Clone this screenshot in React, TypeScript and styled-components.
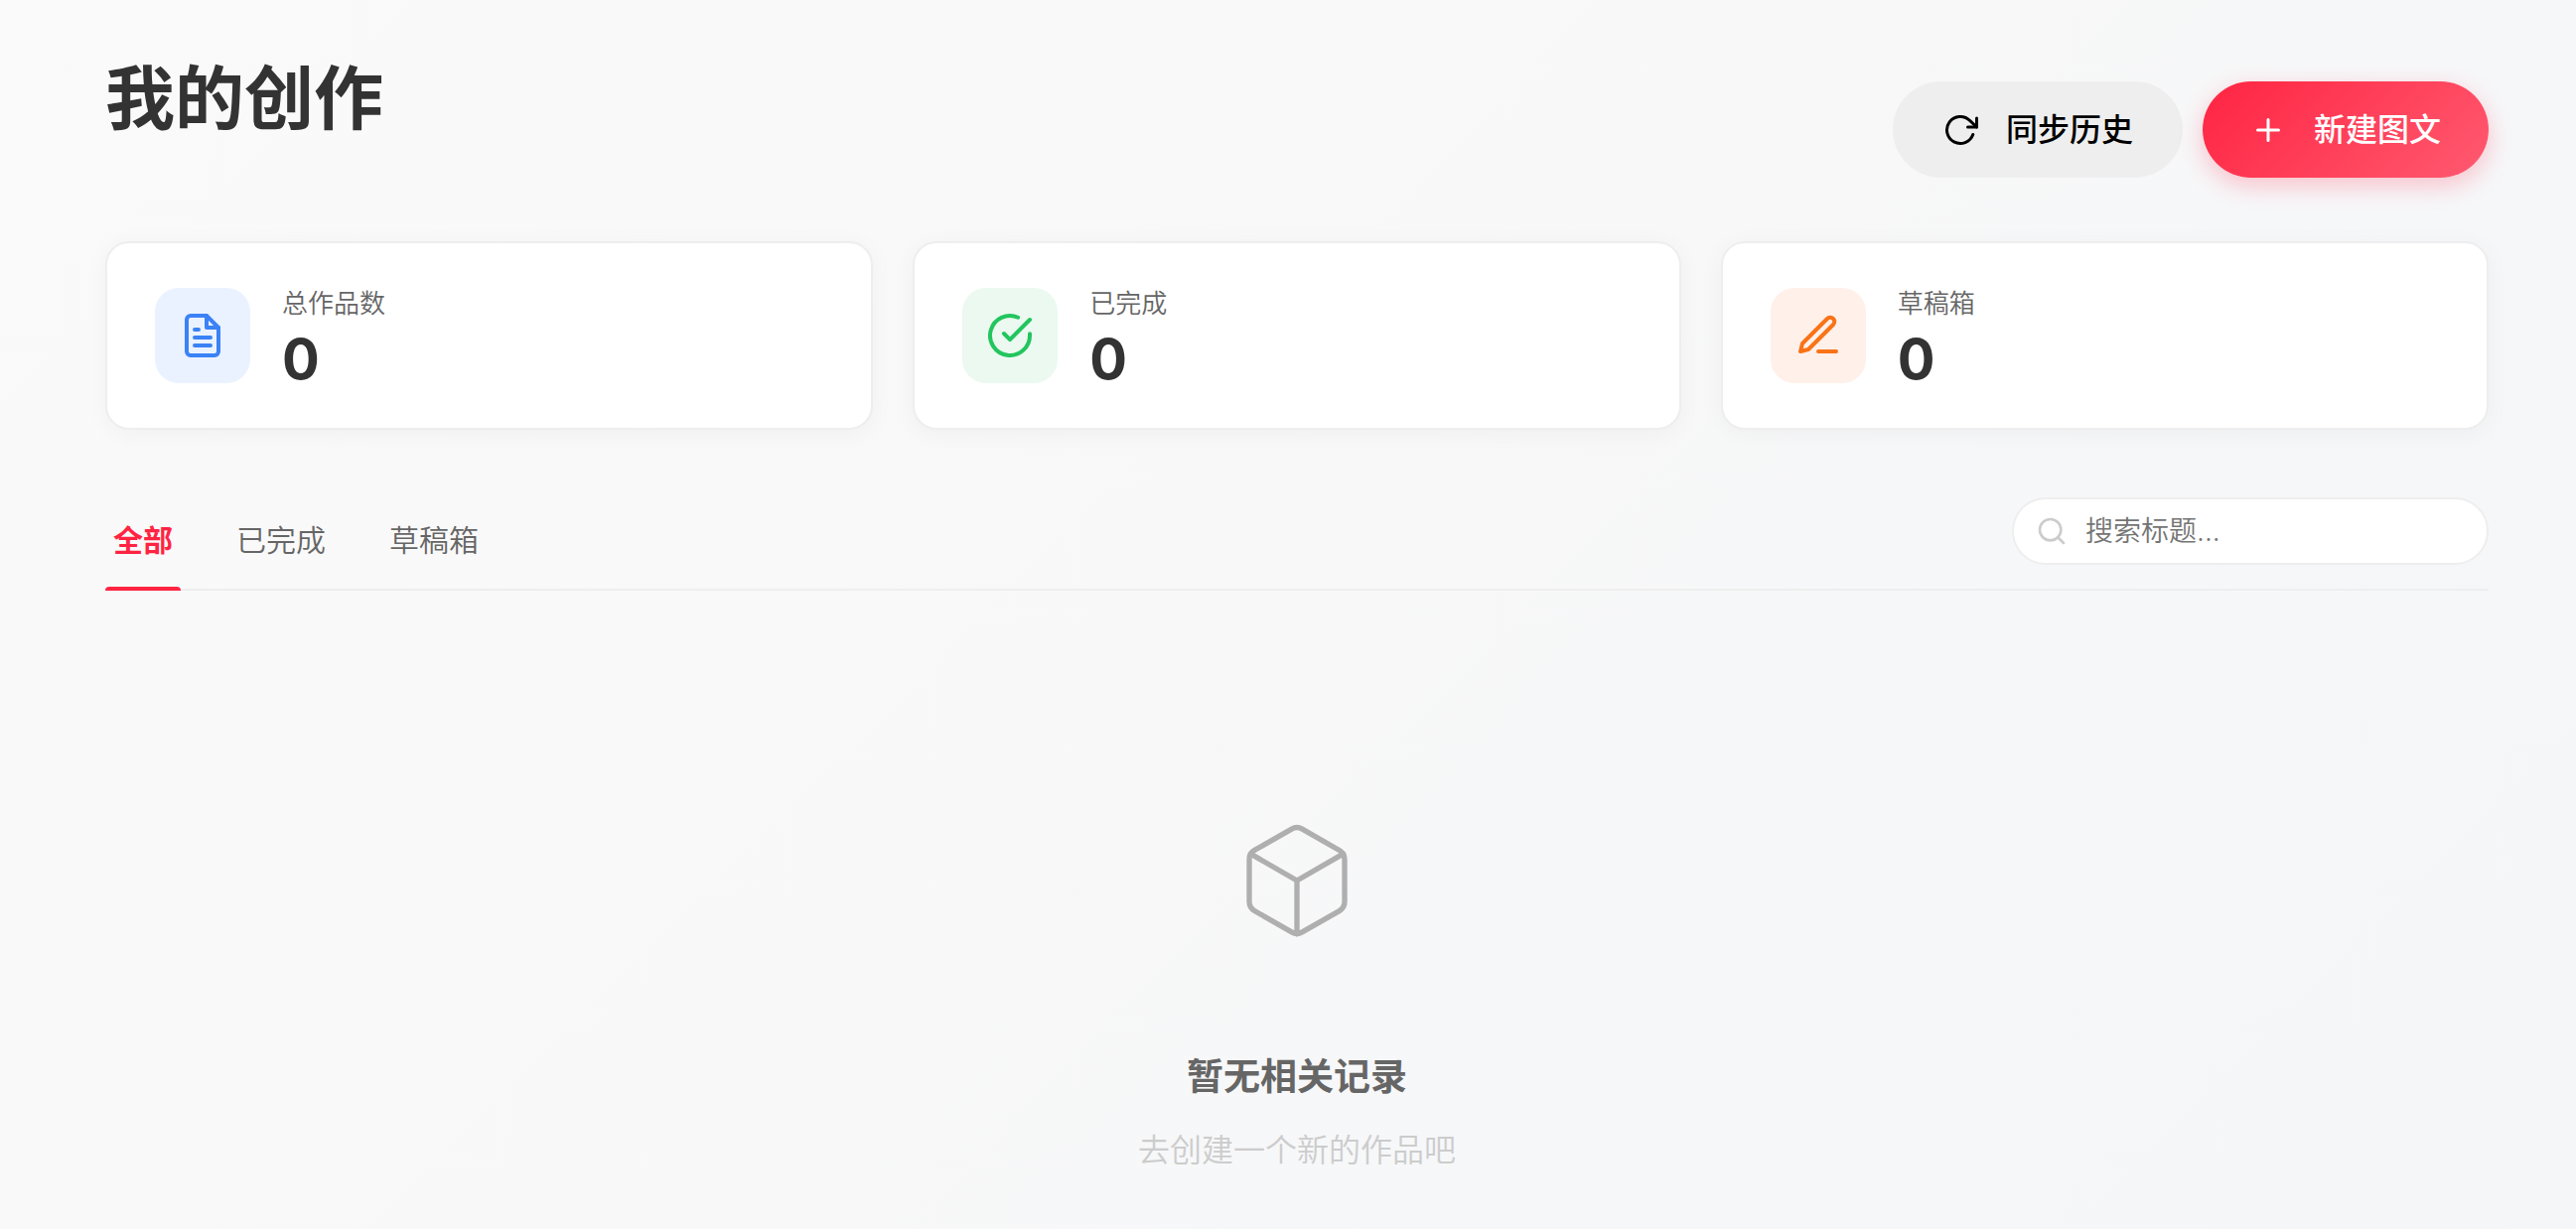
import React, { useState } from "react";
import styled, { createGlobalStyle, css } from "styled-components";

const GlobalStyle = createGlobalStyle`
  *, *::before, *::after { box-sizing: border-box; }
  body {
    margin: 0;
    font-family: Inter, "Noto Sans CJK SC", sans-serif;
    font-weight: 350;
    color: #333;
    background: #fafafa;
  }
  button, input { font: inherit; }
`;

const Page = styled.main`
  min-height: 100vh;
  padding: 48px 88px 40px 106px;
  background: linear-gradient(135deg, #fafafa 0%, #f8f8f8 50%, #f6f7f9 70%, #f4f6f8 100%);
`;

const Header = styled.header`
  display: flex;
  justify-content: space-between;
  align-items: flex-start;
  margin-bottom: 64px;
`;

const Title = styled.h1`
  margin: 0;
  font-size: 70px;
  line-height: 104px;
  font-weight: 600;
`;

const Actions = styled.div`
  display: flex;
  gap: 20px;
  padding-top: 34px;
`;

const Button = styled.button<{ $primary?: boolean }>`
  display: flex;
  align-items: center;
  gap: 28px;
  height: 97px;
  padding: 0 48px;
  border: 2px solid transparent;
  border-radius: 49px;
  font-size: 32px;
  font-weight: 500;
  line-height: 48px;
  color: #000;
  background: #eee;
  cursor: pointer;
  ${(p) =>
    p.$primary &&
    css`
      border: 0;
      color: #fff;
      background: linear-gradient(135deg, #ff2442 0%, #ff5a70 100%);
      box-shadow: 0 8px 24px rgba(255, 36, 66, 0.25);
    `}
`;

const Icon = styled.svg<{ $size: number }>`
  flex: none;
  width: ${(p) => p.$size}px;
  height: ${(p) => p.$size}px;
  fill: none;
  stroke: currentColor;
  stroke-linecap: round;
  stroke-linejoin: round;
`;

const Stats = styled.section`
  display: grid;
  grid-template-columns: repeat(3, 1fr);
  gap: 40px;
  margin-bottom: 68px;
`;

const Card = styled.article`
  display: flex;
  align-items: center;
  gap: 32px;
  height: 190px;
  padding: 0 48px;
  border: 2px solid #eee;
  border-radius: 24px;
  background: #fff;
  box-shadow: 0 4px 24px rgba(0, 0, 0, 0.04);
`;

const Badge = styled.div<{ $color: string; $tint: string }>`
  display: grid;
  place-items: center;
  width: 96px;
  height: 96px;
  border-radius: 24px;
  color: ${(p) => p.$color};
  background: ${(p) => p.$tint};
`;

const Figures = styled.div`
  padding-top: 12px;
`;

const Label = styled.div`
  font-size: 26px;
  line-height: 36px;
  color: #666;
`;

const Value = styled.div`
  font-size: 56px;
  line-height: 76px;
  font-weight: 700;
`;

const Toolbar = styled.div`
  display: flex;
  justify-content: space-between;
  align-items: flex-start;
  border-bottom: 2px solid #eee;
`;

const Tabs = styled.nav`
  display: flex;
  gap: 48px;
  margin-bottom: -2px;
`;

const Tab = styled.button<{ $active: boolean }>`
  position: relative;
  height: 94px;
  padding: 0 8px 8px;
  border: 0;
  background: none;
  font-size: 30px;
  line-height: 44px;
  font-weight: ${(p) => (p.$active ? 600 : 350)};
  color: ${(p) => (p.$active ? "#ff2442" : "#666")};
  cursor: pointer;
  ${(p) =>
    p.$active &&
    css`
      &::after {
        content: "";
        position: absolute;
        inset: auto 0 0;
        height: 4px;
        border-radius: 4px 4px 0 0;
        background: #ff2442;
      }
    `}
`;

const Search = styled.label`
  display: flex;
  align-items: center;
  gap: 18px;
  width: 480px;
  height: 68px;
  padding: 0 22px;
  border: 2px solid #eee;
  border-radius: 34px;
  background: #fff;
  color: #ccc;
`;

const SearchInput = styled.input`
  flex: 1;
  min-width: 0;
  padding: 0;
  border: 0;
  outline: 0;
  background: none;
  font-size: 28px;
  line-height: 40px;
  color: #333;
  &::placeholder { color: #757575; opacity: 1; }
`;

const Empty = styled.section`
  display: flex;
  flex-direction: column;
  align-items: center;
  padding-top: 228px;
  color: #666;
`;

const Cube = styled.div`
  display: flex;
  margin-bottom: 106px;
  color: #afafaf;
`;

const EmptyTitle = styled.h2`
  margin: 0 0 22px;
  font-size: 37px;
  line-height: 56px;
  font-weight: 600;
`;

const EmptyText = styled.p`
  margin: 0;
  font-size: 32px;
  line-height: 48px;
  color: #ccc;
`;

const stats = [
  {
    label: "总作品数",
    value: 0,
    color: "#3b82f6",
    tint: "#ebf2ff",
    icon: (
      <>
        <path d="M14 2H6a2 2 0 0 0-2 2v16a2 2 0 0 0 2 2h12a2 2 0 0 0 2-2V8z" />
        <path d="M14 2v6h6M16 13H8M16 17H8M10 9H8" />
      </>
    ),
  },
  {
    label: "已完成",
    value: 0,
    color: "#22c55e",
    tint: "#ebf9f0",
    icon: (
      <>
        <path d="M22 11.08V12a10 10 0 1 1-5.93-9.14" />
        <path d="M22 4 12 14.01l-3-3" />
      </>
    ),
  },
  {
    label: "草稿箱",
    value: 0,
    color: "#f97316",
    tint: "#fff0ea",
    icon: (
      <>
        <path d="M12 20h9" />
        <path d="M16.5 3.5a2.121 2.121 0 0 1 3 3L7 19l-4 1 1-4L16.5 3.5z" />
      </>
    ),
  },
];

const tabs = ["全部", "已完成", "草稿箱"];

export default function App() {
  const [active, setActive] = useState(tabs[0]);
  return (
    <>
      <GlobalStyle />
      <Page lang="zh-CN">
        <Header>
          <Title>我的创作</Title>
          <Actions>
            <Button type="button">
              <Icon $size={36} viewBox="0 0 24 24" strokeWidth={2} aria-hidden>
                <path d="M23 4v6h-6" />
                <path d="M20.49 15a9 9 0 1 1-2.12-9.36L23 10" />
              </Icon>
              同步历史
            </Button>
            <Button type="button" $primary>
              <Icon $size={36} viewBox="0 0 24 24" strokeWidth={2} aria-hidden>
                <path d="M12 5v14M5 12h14" />
              </Icon>
              新建图文
            </Button>
          </Actions>
        </Header>

        <Stats>
          {stats.map((s) => (
            <Card key={s.label}>
              <Badge $color={s.color} $tint={s.tint}>
                <Icon $size={48} viewBox="0 0 24 24" strokeWidth={2} aria-hidden>
                  {s.icon}
                </Icon>
              </Badge>
              <Figures>
                <Label>{s.label}</Label>
                <Value>{s.value}</Value>
              </Figures>
            </Card>
          ))}
        </Stats>

        <Toolbar>
          <Tabs>
            {tabs.map((t) => (
              <Tab key={t} type="button" $active={t === active} onClick={() => setActive(t)}>
                {t}
              </Tab>
            ))}
          </Tabs>
          <Search>
            <Icon $size={32} viewBox="0 0 24 24" strokeWidth={2} aria-hidden>
              <circle cx="11" cy="11" r="8" />
              <path d="m21 21-4.35-4.35" />
            </Icon>
            <SearchInput type="text" placeholder="搜索标题..." aria-label="搜索标题" />
          </Search>
        </Toolbar>

        <Empty>
          <Cube>
            <Icon $size={128} viewBox="0 0 24 24" strokeWidth={1} aria-hidden>
              <path d="M21 16V8a2 2 0 0 0-1-1.73l-7-4a2 2 0 0 0-2 0l-7 4A2 2 0 0 0 3 8v8a2 2 0 0 0 1 1.73l7 4a2 2 0 0 0 2 0l7-4A2 2 0 0 0 21 16z" />
              <path d="M3.27 6.96 12 12.01l8.73-5.05M12 22.08V12" />
            </Icon>
          </Cube>
          <EmptyTitle>暂无相关记录</EmptyTitle>
          <EmptyText>去创建一个新的作品吧</EmptyText>
        </Empty>
      </Page>
    </>
  );
}
